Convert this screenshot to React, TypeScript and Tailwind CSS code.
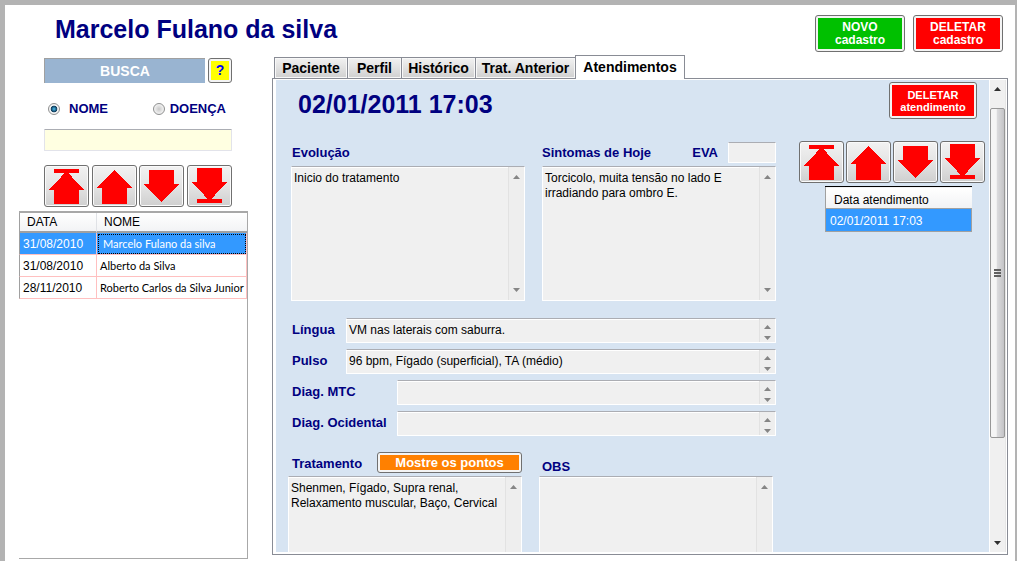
import type { ReactNode } from "react";
import { clsx } from "clsx";

const ARROWS = [
  { label: "Primeiro", points: "22.5,6 40,25 35,25 35,39 10,39 10,25 5,25", bar: 4 },
  { label: "Anterior", points: "22.5,5 40,23 35,23 35,39 10,39 10,23 5,23", bar: null },
  { label: "Próximo", points: "10,5 35,5 35,19 40,19 22.5,37 5,19 10,19", bar: null },
  { label: "Último", points: "10,3 35,3 35,17 40,17 22.5,36 5,17 10,17", bar: 34 },
];

function ArrowBar() {
  return (
    <div className="flex justify-between">
      {ARROWS.map((a) => (
        <button
          key={a.label}
          type="button"
          aria-label={a.label}
          className="h-[42px] w-[45px] rounded-[3px] border border-[#707070] bg-linear-to-b from-[#f2f2f2] via-[#e4e4e4] to-[#cfcfcf] shadow-[inset_0_0_0_1px_#fafafa]"
        >
          <svg viewBox="1 1 43 40" className="block h-full w-full" shapeRendering="crispEdges" fill="#ff0000">
            <polygon points={a.points} />
            {a.bar !== null && <rect x="10" y={a.bar} width="25" height="4" />}
          </svg>
        </button>
      ))}
    </div>
  );
}

function ColorButton({ className, fill, children }: { className: string; fill: string; children: ReactNode }) {
  return (
    <button
      type="button"
      className={clsx("flex rounded-[3px] border border-[#707070] bg-[#f4f4f4] p-[2px] text-center font-bold", className)}
    >
      <span className={clsx("flex h-full w-full flex-col items-center justify-center", fill)}>{children}</span>
    </button>
  );
}

function Triangle({ down = false, dark = false }: { down?: boolean; dark?: boolean }) {
  return (
    <svg viewBox="0 0 7 4" className="block h-1 w-[7px] shrink-0" fill={dark ? "#303030" : "#858585"}>
      <polygon points={down ? "0,0 7,0 3.5,4" : "0,4 7,4 3.5,0"} />
    </svg>
  );
}

function MemoBox({ id, value, tall = false }: { id: string; value: string; tall?: boolean }) {
  return (
    <div
      className={clsx(
        "flex min-w-0 flex-1 rounded-[1px] border border-t-[#abadb3] border-r-white border-b-white border-l-white bg-[#f0f0f0] shadow-[inset_0_1px_0_#ffffff]",
        tall && "min-h-[135px]"
      )}
    >
      <textarea
        id={id}
        defaultValue={value}
        className="min-w-0 flex-1 resize-none overflow-hidden bg-transparent pt-1 pl-[2px] text-[12px] leading-[15px] text-black outline-none"
      />
      <div
        className={clsx(
          "flex w-4 flex-col items-center justify-between border-l border-[#e2e2e2] bg-[#eeeeee]",
          tall ? "py-2" : "pt-[6px] pb-[2px]"
        )}
      >
        <Triangle />
        <Triangle down />
      </div>
    </div>
  );
}

const LABEL = "text-[13px] leading-4 font-bold whitespace-nowrap text-[#000080]";

const RADIO =
  "h-3 w-3 appearance-none rounded-full border border-[#8e8f8f] bg-[radial-gradient(circle,#c8c8c8_0%,#ededed_60%,#ffffff_100%)] checked:bg-[radial-gradient(circle,#4fc3f0_0%,#1c5f86_30%,#123c5a_42%,#f4f4f4_52%)]";

const PATIENTS = [
  { date: "31/08/2010", name: "Marcelo Fulano da silva" },
  { date: "31/08/2010", name: "Alberto da Silva" },
  { date: "28/11/2010", name: "Roberto Carlos da Silva Junior" },
];

const TABS = [
  { name: "Paciente", width: "w-[74px]" },
  { name: "Perfil", width: "w-[55px]" },
  { name: "Histórico", width: "w-[75px]" },
  { name: "Trat. Anterior", width: "w-[101px]" },
  { name: "Atendimentos", width: "w-[110px]", active: true },
];

const FIELDS = [
  { id: "lingua", label: "Língua", value: "VM nas laterais com saburra.", width: "w-[55px]" },
  { id: "pulso", label: "Pulso", value: "96 bpm, Fígado (superficial), TA (médio)", width: "w-[55px]" },
  { id: "mtc", label: "Diag. MTC", value: "", width: "w-[106px]" },
  { id: "ocidental", label: "Diag. Ocidental", value: "", width: "w-[106px]" },
];

function SearchColumn() {
  return (
    <aside className="mb-[2px] flex w-[229px] shrink-0 flex-col pt-[3px]">
      <div className="ml-[25px] flex w-[188px] flex-col">
        <div className="flex h-[25px] justify-between">
          <div className="flex w-[161px] items-center justify-center border-t border-l border-[#a0a0a0] bg-[#99b4d1] text-[14px] font-bold text-white">
            BUSCA
          </div>
          <ColorButton className="w-6 text-[14px] text-[#0000ff]" fill="bg-[#ffff00]">
            ?
          </ColorButton>
        </div>
        <div className="mt-4 flex h-5 items-center justify-between pr-[6px] pl-1">
          <label className={clsx("flex items-center gap-[9px]", LABEL)}>
            <input type="radio" name="busca" defaultChecked className={RADIO} />
            NOME
          </label>
          <label className={clsx("flex items-center gap-[5px]", LABEL)}>
            <input type="radio" name="busca" className={RADIO} />
            DOENÇA
          </label>
        </div>
        <input
          type="text"
          aria-label="Texto da busca"
          className="mt-[10px] mb-[14px] h-[22px] rounded-[1px] border border-[#e2e3ea] border-t-[#abadb3] bg-[#ffffe1] px-1 text-[12px] outline-none"
        />
        <ArrowBar />
      </div>
      <div className="mt-1 flex-1 border-t-2 border-r border-b border-[#a8a8a8]">
        <table className="w-full table-fixed border-separate border-spacing-0 text-black">
          <thead>
            <tr className="bg-linear-to-b from-white to-[#f1f2f4] text-left text-[12px] leading-4">
              <th className="h-5 w-[78px] border-r border-b-2 border-l border-r-[#e0e2e6] border-b-[#a0a0a0] border-l-[#a0a0a0] pl-[7px] font-normal">
                DATA
              </th>
              <th className="h-5 border-b-2 border-[#a0a0a0] pl-[7px] font-normal">NOME</th>
            </tr>
          </thead>
          <tbody>
            {PATIENTS.map((p, i) => (
              <tr key={p.name} className={clsx("leading-4", i === 0 && "bg-[#3399ff] text-white")}>
                <td className="h-[22px] border-r border-b border-l border-r-[#ffc0c0] border-b-[#ffc0c0] border-l-[#a0a0a0] pl-[3px] text-[12px]">
                  {p.date}
                </td>
                <td
                  className={clsx(
                    "h-[22px] border-r border-b border-[#ffc0c0] font-[Lato,'Liberation_Sans',sans-serif] text-[11px] whitespace-nowrap",
                    i === 0 ? "pl-[6px] outline-1 -outline-offset-2 outline-black outline-dotted" : "pl-[3px]"
                  )}
                >
                  {p.name}
                </td>
              </tr>
            ))}
          </tbody>
        </table>
      </div>
    </aside>
  );
}

function VisitForm() {
  return (
    <div className="flex min-w-0 flex-1 flex-col">
      <h2 className="flex h-[50px] shrink-0 items-center pl-[7px] text-[25px] font-bold text-[#000080]">
        02/01/2011 17:03
      </h2>
      <div className="mt-3 flex gap-[17px]">
        <div className="flex min-w-0 flex-1 flex-col">
          <label htmlFor="evolucao" className={clsx("mb-[3px] h-[21px] pt-[3px] pl-px", LABEL)}>
            Evolução
          </label>
          <MemoBox id="evolucao" value="Inicio do tratamento" tall />
        </div>
        <div className="flex min-w-0 flex-1 flex-col">
          <div className="mb-[3px] flex h-[21px] items-start">
            <label htmlFor="sintomas" className={clsx("flex-1 pt-[3px]", LABEL)}>
              Sintomas de Hoje
            </label>
            <label htmlFor="eva" className={clsx("mr-[10px] pt-[3px]", LABEL)}>
              EVA
            </label>
            <input
              id="eva"
              type="text"
              className="h-[21px] w-12 rounded-[1px] border border-white border-t-[#abadb3] bg-[#f0f0f0] px-1 text-[12px] outline-none"
            />
          </div>
          <MemoBox id="sintomas" value={"Torcicolo, muita tensão no lado E\nirradiando para ombro E."} tall />
        </div>
      </div>
      <div className="mt-[17px] flex flex-col gap-[6px]">
        {FIELDS.map((f) => (
          <div key={f.id} className="flex h-[25px]">
            <label htmlFor={f.id} className={clsx("shrink-0 pt-1 pl-px", LABEL, f.width)}>
              {f.label}
            </label>
            <MemoBox id={f.id} value={f.value} />
          </div>
        ))}
      </div>
      <div className="mt-4 mr-[3px] -ml-[3px] flex gap-[17px]">
        <div className="flex min-w-0 flex-1 flex-col">
          <div className="mb-[3px] flex h-[21px] justify-between">
            <label htmlFor="tratamento" className={clsx("pt-1 pl-1", LABEL)}>
              Tratamento
            </label>
            <ColorButton className="w-[145px] text-[13px] leading-4 text-white" fill="bg-[#ff8000]">
              Mostre os pontos
            </ColorButton>
          </div>
          <MemoBox
            id="tratamento"
            value={"Shenmen, Fígado, Supra renal,\nRelaxamento muscular, Baço, Cervical"}
            tall
          />
        </div>
        <div className="flex min-w-0 flex-1 flex-col">
          <label htmlFor="obs" className={clsx("mb-[3px] h-[21px] pt-[7px] pl-[3px]", LABEL)}>
            OBS
          </label>
          <MemoBox id="obs" value="" tall />
        </div>
      </div>
    </div>
  );
}

function VisitList() {
  return (
    <div className="flex w-[186px] shrink-0 flex-col pt-[2px]">
      <ColorButton className="mr-2 mb-[22px] h-[37px] w-[88px] self-end text-[11px] leading-3 text-white" fill="bg-[#ff0000]">
        <span>DELETAR</span>
        <span>atendimento</span>
      </ColorButton>
      <ArrowBar />
      <table className="mt-[3px] mr-[13px] ml-[26px] border-collapse text-left text-[12px]">
        <thead>
          <tr className="h-[22px] border-t border-l border-t-black border-l-[#a0a0a0] bg-linear-to-b from-white to-[#f1f2f4] text-black">
            <th className="pt-1 pl-2 leading-4 font-normal">Data atendimento</th>
          </tr>
        </thead>
        <tbody>
          <tr className="h-[23px] border border-[#a0a0a0] bg-[#3399ff] text-white">
            <td className="pt-[2px] pl-1 leading-4">02/01/2011 17:03</td>
          </tr>
        </tbody>
      </table>
    </div>
  );
}

function PanelScrollbar() {
  return (
    <div className="flex w-4 shrink-0 flex-col border-r border-[#e6e6e6] bg-[#f0f0f0]">
      <button type="button" aria-label="Rolar para cima" className="flex h-7 shrink-0 justify-center pt-[7px]">
        <Triangle dark />
      </button>
      <div className="flex h-[70%] flex-col items-center justify-center gap-px rounded-[2px] border border-[#979797] bg-linear-to-r from-[#f5f5f5] from-40% via-[#dadadc] via-50% to-[#c4c4c7]">
        <span className="h-[2px] w-[7px] bg-[#606060]" />
        <span className="h-[2px] w-[7px] bg-[#606060]" />
        <span className="h-[2px] w-[7px] bg-[#606060]" />
      </div>
      <button type="button" aria-label="Rolar para baixo" className="flex flex-1 items-end justify-center pb-[7px]">
        <Triangle down dark />
      </button>
    </div>
  );
}

export default function App() {
  return (
    <div className="flex h-screen flex-col overflow-hidden border-t-[5px] border-r-2 border-l-[5px] border-[#b3b3b3] bg-white font-['Liberation_Sans',Arial,sans-serif]">
      <header className="flex h-[50px] shrink-0 justify-between pr-3 pl-[50px]">
        <h1 className="flex items-center text-[25px] font-bold text-[#000080]">Marcelo Fulano da silva</h1>
        <div className="flex gap-2 pt-[10px]">
          <ColorButton className="h-[37px] w-[90px] text-[12px] leading-[13px] text-white" fill="bg-[#00c000]">
            <span>NOVO</span>
            <span>cadastro</span>
          </ColorButton>
          <ColorButton className="h-[37px] w-[90px] text-[12px] leading-[13px] text-white" fill="bg-[#ff0000]">
            <span>DELETAR</span>
            <span>cadastro</span>
          </ColorButton>
        </div>
      </header>
      <div className="flex min-h-0 flex-1 gap-6 pr-[7px] pl-[14px]">
        <SearchColumn />
        <main className="mb-[6px] flex min-w-0 flex-1 flex-col">
          <div role="tablist" className="z-10 -mb-px flex h-6 shrink-0 items-end pl-[2px]">
            {TABS.map((t) => (
              <button
                key={t.name}
                type="button"
                role="tab"
                aria-selected={!!t.active}
                className={clsx(
                  "-mr-px border border-[#898c95] text-[14px] leading-5 font-bold whitespace-nowrap text-black",
                  t.width,
                  t.active
                    ? "h-6 border-b-0 bg-white pb-[2px]"
                    : "h-[22px] bg-linear-to-b from-[#f2f2f2] to-[#d0d0d0] shadow-[inset_0_0_0_1px_#f8f8f8]"
                )}
              >
                {t.name}
              </button>
            ))}
          </div>
          <div className="flex min-h-0 flex-1 border border-[#898c95] bg-white pt-px pr-px pb-[2px] pl-[3px]">
            <div className="mr-px flex min-w-0 flex-1 gap-[23px] overflow-hidden bg-[#d7e4f2] pr-1 pl-[15px]">
              <VisitForm />
              <VisitList />
            </div>
            <PanelScrollbar />
          </div>
        </main>
      </div>
    </div>
  );
}
